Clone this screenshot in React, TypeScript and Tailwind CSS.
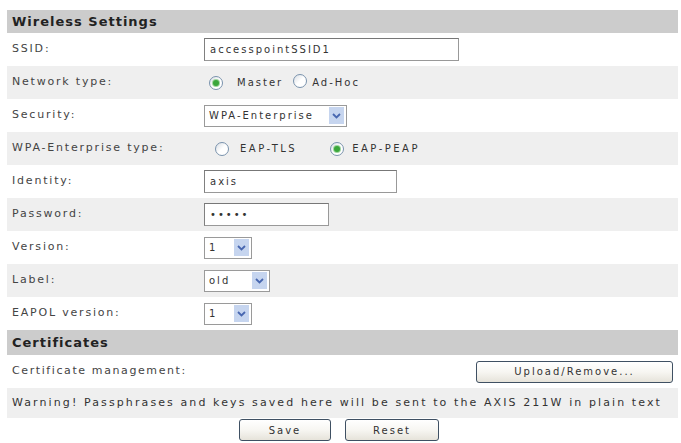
import React from "react";

const Radio = ({ checked }: { checked?: boolean }) => (
  <span className="relative inline-flex h-[14px] w-[14px] shrink-0 items-center justify-center rounded-full border border-[#7a93ad] bg-gradient-to-br from-[#d8dde3] via-white to-white">
    {checked && (
      <span className="h-[6px] w-[6px] rounded-full bg-[#3aa63a] shadow-[0_0_0_1px_#9fd69f]" />
    )}
  </span>
);

const Select = ({ value, w }: { value: string; w: string }) => (
  <div className={`flex h-[22px] items-center justify-between border border-[#9a9a9a] bg-white pl-[4px] pr-[2px] ${w}`}>
    <span className="text-[10px] tracking-[2px] text-[#333]">{value}</span>
    <span className="flex h-[17px] w-[15px] items-center justify-center bg-[#c6d5ef]">
      <svg width="9" height="6" viewBox="0 0 9 6">
        <path d="M1 1 L4.5 4.5 L8 1" fill="none" stroke="#4867b0" strokeWidth="1.8" />
      </svg>
    </span>
  </div>
);

const Input = ({ value, w }: { value: string; w: string }) => (
  <div className={`flex h-[23px] items-center border border-[#999] border-t-[#777] border-l-[#808080] bg-white pl-[5px] ${w}`}>
    <span className="text-[10px] tracking-[2px] text-[#333]">{value}</span>
  </div>
);

const Row = ({
  label,
  gray,
  children,
  h = "h-[33px]",
}: {
  label: string;
  gray?: boolean;
  children?: React.ReactNode;
  h?: string;
}) => (
  <div className={`flex items-center ${h} ${gray ? "bg-[#efefef]" : "bg-white"}`}>
    <div className="w-[197px] shrink-0 pl-[5px] text-[11px] tracking-[1.8px] text-[#444]">{label}</div>
    <div className="flex items-center">{children}</div>
  </div>
);

const Header = ({ title, h }: { title: string; h: string }) => (
  <div className={`flex items-center bg-[#cccccc] pl-[5px] text-[13px] font-bold tracking-[1px] text-[#222] ${h}`}>
    {title}
  </div>
);

const Button = ({ label, w }: { label: string; w: string }) => (
  <div
    className={`flex h-[22px] items-center justify-center rounded-[3px] border border-[#3f5063] bg-gradient-to-b from-white via-[#f7f6f2] to-[#e6e3da] text-[10px] tracking-[2px] text-[#333] ${w}`}
  >
    {label}
  </div>
);

export default function App() {
  return (
    <div className="h-[443px] w-[681px] overflow-hidden bg-white pl-[7px] pt-[10px] font-['DejaVu_Sans',sans-serif]">
      <div className="w-[671px]">
        <Header title="Wireless Settings" h="h-[23px]" />
        <Row label="SSID:">
          <Input value="accesspointSSID1" w="w-[255px]" />
        </Row>
        <Row label="Network type:" gray>
          <div className="ml-[5px] flex items-center text-[10px] tracking-[2px] text-[#333]">
            <Radio checked />
            <span className="ml-[14px]">Master</span>
            <span className="ml-[10px]">
              <Radio />
            </span>
            <span className="ml-[5px]">Ad-Hoc</span>
          </div>
        </Row>
        <Row label="Security:">
          <Select value="WPA-Enterprise" w="w-[143px]" />
        </Row>
        <Row label="WPA-Enterprise type:" gray>
          <div className="ml-[11px] flex items-center text-[10px] tracking-[2.5px] text-[#333]">
            <Radio />
            <span className="ml-[11px]">EAP-TLS</span>
            <span className="ml-[33px]">
              <Radio checked />
            </span>
            <span className="ml-[8px]">EAP-PEAP</span>
          </div>
        </Row>
        <Row label="Identity:">
          <Input value="axis" w="w-[193px]" />
        </Row>
        <Row label="Password:" gray>
          <Input value="•••••" w="w-[125px]" />
        </Row>
        <Row label="Version:">
          <Select value="1" w="w-[48px]" />
        </Row>
        <Row label="Label:" gray>
          <Select value="old" w="w-[66px]" />
        </Row>
        <Row label="EAPOL version:">
          <Select value="1" w="w-[48px]" />
        </Row>
        <Header title="Certificates" h="h-[25px]" />
        <div className="flex h-[33px] items-center justify-between bg-white pr-[5px]">
          <div className="pl-[5px] text-[11px] tracking-[1.6px] text-[#444]">Certificate management:</div>
          <Button label="Upload/Remove..." w="w-[197px]" />
        </div>
        <div className="flex h-[30px] items-center bg-[#efefef] pl-[5px] text-[11px] tracking-[2.1px] text-[#333]">
          Warning! Passphrases and keys saved here will be sent to the AXIS 211W in plain text
        </div>
        <div className="mt-[1px] flex justify-center gap-[14px] pr-[7px]">
          <Button label="Save" w="w-[92px]" />
          <Button label="Reset" w="w-[94px]" />
        </div>
      </div>
    </div>
  );
}
